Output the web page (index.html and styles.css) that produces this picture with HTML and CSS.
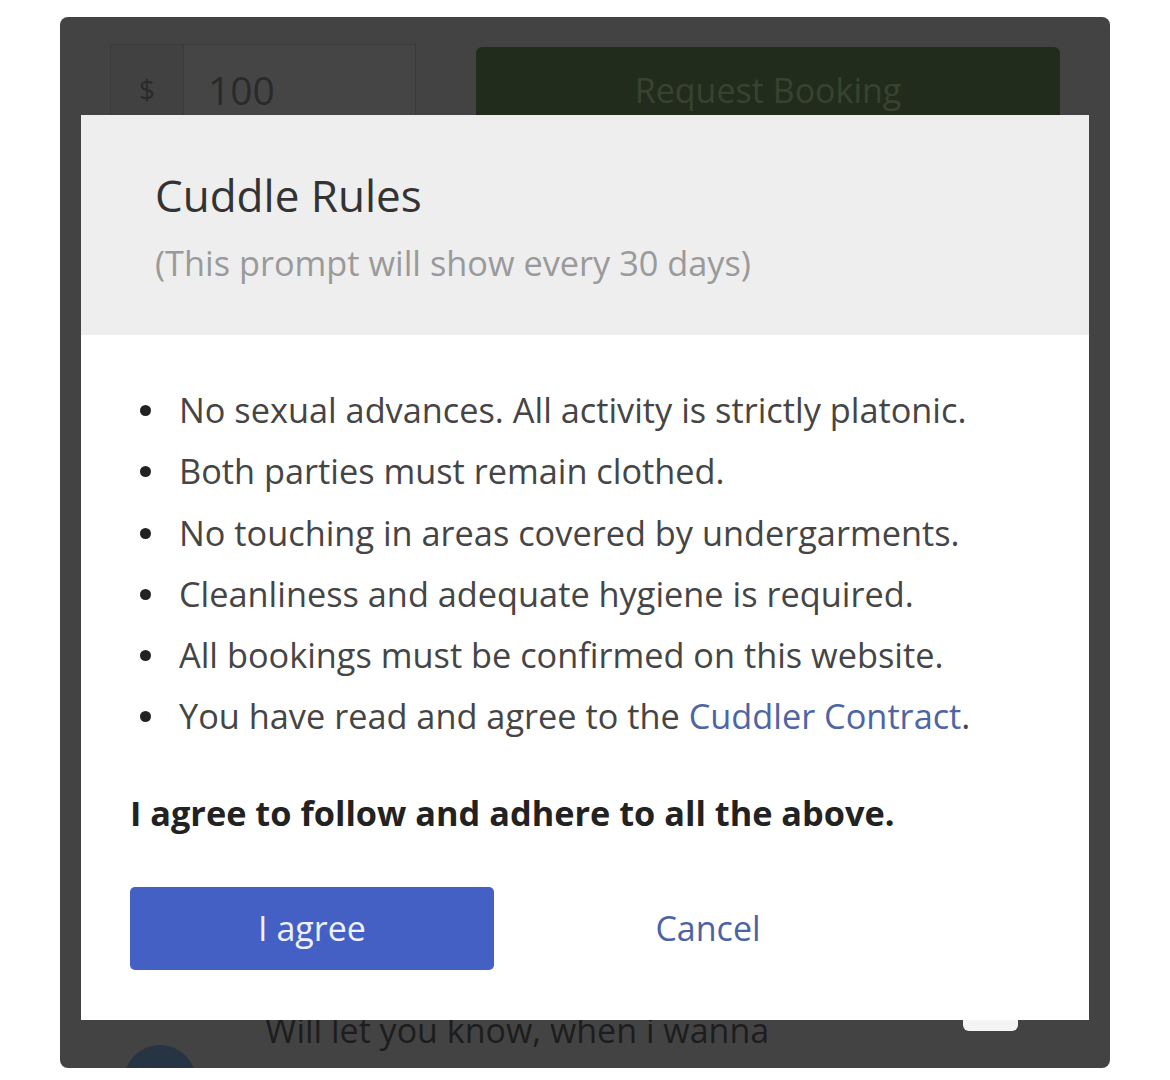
FILE: index.html
```html
<!DOCTYPE html>
<html lang="en">
<head>
    <meta charset="UTF-8">
    <meta name="viewport" content="width=device-width, initial-scale=1.0">
    <title>Cuddle Rules</title>
    <link rel="stylesheet" href="styles.css">
</head>
<body>
    <div class="screen">
        <div class="page">
            <div class="booking-row">
                <div class="price-group">
                    <span class="price-prefix">$</span>
                    <span class="price-value">100</span>
                </div>
                <button class="request-button">Request Booking</button>
            </div>
            <div class="message-row">
                <div class="avatar"></div>
                <p class="message-text">Will let you know, when i wanna</p>
                <div class="message-tab"></div>
            </div>
        </div>
        <div class="modal">
            <header class="modal-header">
                <h1>Cuddle Rules</h1>
                <p class="modal-note">(This prompt will show every 30 days)</p>
            </header>
            <div class="modal-body">
                <ul class="rules">
                    <li>No sexual advances. All activity is strictly platonic.</li>
                    <li>Both parties must remain clothed.</li>
                    <li>No touching in areas covered by undergarments.</li>
                    <li>Cleanliness and adequate hygiene is required.</li>
                    <li>All bookings must be confirmed on this website.</li>
                    <li>You have read and agree to the <a href="#">Cuddler Contract</a>.</li>
                </ul>
                <p class="agree-text">I agree to follow and adhere to all the above.</p>
                <div class="modal-actions">
                    <button class="agree-button">I agree</button>
                    <button class="cancel-button">Cancel</button>
                </div>
            </div>
        </div>
    </div>
</body>
</html>
```

FILE: styles.css
```css
body, html {
    margin: 0;
    padding: 0;
    background-color: #ffffff;
    font-family: "Open Sans", Arial, sans-serif;
}
.screen {
    position: relative;
    width: 1050px;
    height: 1051px;
    margin: 17px 0 0 60px;
    background-color: #434343;
    border-radius: 8px;
    overflow: hidden;
}
.page {
    height: 100%;
    display: flex;
    flex-direction: column;
    justify-content: space-between;
}
.booking-row {
    display: flex;
    gap: 60px;
    padding: 27px 50px 0 50px;
}
.price-group {
    width: 306px;
    height: 90px;
    display: flex;
    align-items: center;
    border: 1px solid #3b3b3b;
    background-color: #454545;
    box-sizing: border-box;
    font-size: 39px;
    color: #2a2a2a;
}
.price-prefix {
    width: 72px;
    height: 100%;
    display: flex;
    align-items: center;
    justify-content: center;
    font-size: 28px;
    background-color: #414141;
    border-right: 1px solid #3b3b3b;
}
.price-value {
    padding-left: 24px;
}
.request-button {
    flex: 1;
    height: 90px;
    margin-top: 3px;
    padding-bottom: 6px;
    border: none;
    border-radius: 6px;
    background-color: #222c1c;
    color: #38432f;
    font-family: inherit;
    font-size: 34px;
}
.message-row {
    position: relative;
    height: 80px;
    padding-left: 205px;
}
.avatar {
    position: absolute;
    left: 64px;
    top: 57px;
    width: 72px;
    height: 72px;
    border-radius: 50%;
    background-color: #273444;
}
.message-text {
    margin: 0;
    padding-top: 19px;
    font-size: 34px;
    line-height: 46px;
    color: #1d1d1d;
}
.message-tab {
    position: absolute;
    left: 903px;
    top: 32px;
    width: 55px;
    height: 11px;
    background-color: #f4f4f4;
    border-radius: 0 0 6px 6px;
}
.modal {
    position: absolute;
    left: 21px;
    top: 98px;
    width: 1008px;
    height: 905px;
    background-color: #ffffff;
    display: flex;
    flex-direction: column;
}
.modal-header {
    background-color: #eeeeee;
    height: 220px;
    box-sizing: border-box;
    padding: 52px 74px 0 74px;
}
.modal-header h1 {
    margin: 0;
    font-size: 44px;
    line-height: 56px;
    font-weight: normal;
    color: #333333;
}
.modal-note {
    margin: 19px 0 0 0;
    font-size: 34.3px;
    line-height: 42px;
    color: #9a9a9a;
}
.modal-body {
    padding: 44px 49px 0 49px;
}
.rules {
    list-style: none;
    margin: 0;
    padding: 0;
}
.rules li {
    position: relative;
    padding-left: 49px;
    font-size: 34.3px;
    line-height: 61.3px;
    color: #454545;
}
.rules li::before {
    content: "";
    position: absolute;
    left: 10px;
    top: 26px;
    width: 11px;
    height: 11px;
    border-radius: 50%;
    background-color: #222222;
}
.rules a {
    color: #4d64a5;
    text-decoration: none;
}
.agree-text {
    margin: 45px 0 0 0;
    font-size: 34.3px;
    line-height: 42px;
    font-weight: bold;
    color: #222222;
}
.modal-actions {
    display: flex;
    gap: 32px;
    margin-top: 53px;
}
.agree-button,
.cancel-button {
    width: 364px;
    height: 83px;
    border: none;
    border-radius: 5px;
    font-family: inherit;
    font-size: 34px;
    cursor: pointer;
}
.agree-button {
    background-color: #4460c5;
    color: #eef1fa;
}
.cancel-button {
    background: none;
    color: #4b62a6;
}
```
